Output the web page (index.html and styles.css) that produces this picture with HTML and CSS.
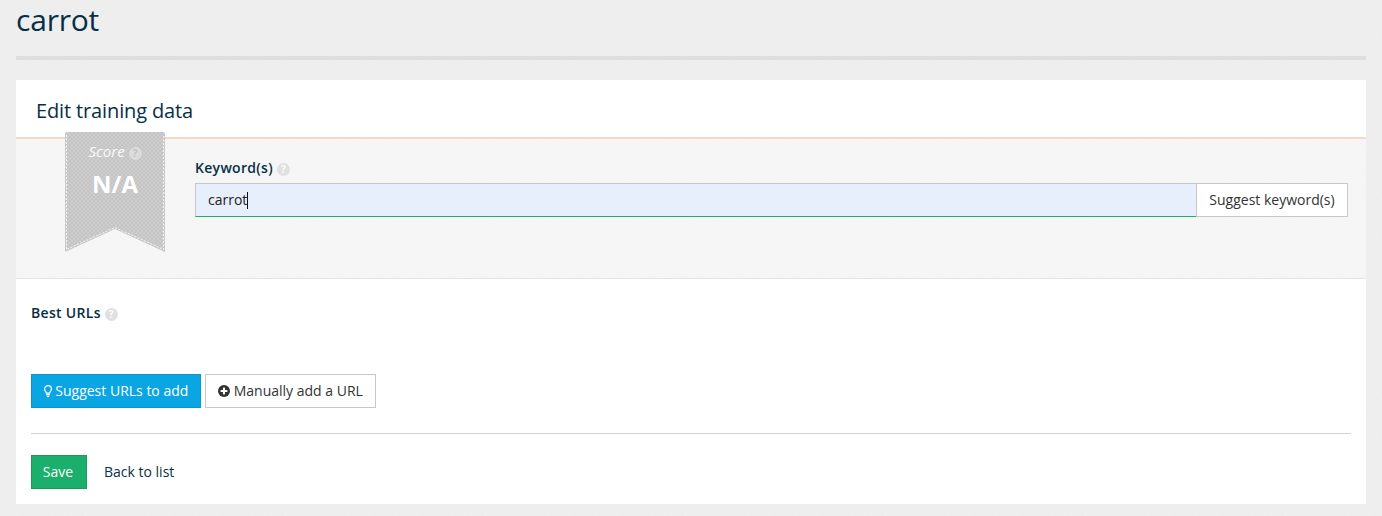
FILE: index.html
```html
<!DOCTYPE html>
<html lang="en">
<head>
    <meta charset="UTF-8">
    <title>carrot</title>
    <link rel="stylesheet" href="styles.css">
</head>
<body>

<div class="page-title">
    <h1>carrot</h1>
</div>

<div class="card">
    <div class="card-header">
        <h2>Edit training data</h2>
    </div>

    <div class="keyword-section">
        <!-- score ribbon hangs over the header line -->
        <div class="score-badge">
            <svg class="ribbon" width="100" height="120" viewBox="0 0 100 120">
                <defs>
                    <pattern id="checks" width="4" height="4" patternUnits="userSpaceOnUse">
                        <rect width="4" height="4" fill="#cdcdcd"/>
                        <rect width="2" height="2" fill="#c4c4c4"/>
                        <rect x="2" y="2" width="2" height="2" fill="#c4c4c4"/>
                    </pattern>
                </defs>
                <path d="M0 2 Q0 0 2 0 H98 Q100 0 100 2 V120 L50 97 L0 120 Z" fill="url(#checks)"/>
                <path d="M1.5 3 V117.5 L50 95.5 L98.5 117.5 V3" fill="none" stroke="#f8f8f8" stroke-width="1" stroke-dasharray="2 1.5"/>
            </svg>
            <div class="score-label">Score <span class="help help-badge">?</span></div>
            <div class="score-value">N/A</div>
        </div>

        <div class="keyword-field">
            <label class="field-label">Keyword(s) <span class="help">?</span></label>
            <div class="input-group">
                <div class="text-input">carrot<span class="caret"></span></div>
                <button class="btn btn-addon">Suggest keyword(s)</button>
            </div>
        </div>
    </div>

    <div class="card-body">
        <label class="field-label">Best URLs <span class="help">?</span></label>

        <div class="url-actions">
            <button class="btn btn-blue">
                <svg class="icon-bulb" width="8" height="13" viewBox="0 0 8 13">
                    <path d="M2.4 8.2 C2.2 6.8 .6 6 .6 4 A3.4 3.4 0 0 1 7.4 4 C7.4 6 5.8 6.8 5.6 8.2 Z" fill="none" stroke="#fff" stroke-width="1.2"/>
                    <rect x="2.2" y="8.9" width="3.6" height="1.5" fill="#fff"/>
                    <rect x="2.9" y="10.8" width="2.2" height="1.4" fill="#fff"/>
                </svg>
                Suggest URLs to add
            </button>
            <button class="btn btn-plain">
                <svg class="icon-plus" width="12" height="12" viewBox="0 0 12 12">
                    <circle cx="6" cy="6" r="6" fill="#333"/>
                    <rect x="2.6" y="5" width="6.8" height="2" fill="#fff"/>
                    <rect x="5" y="2.6" width="2" height="6.8" fill="#fff"/>
                </svg>
                Manually add a URL
            </button>
        </div>

        <div class="form-actions">
            <button class="btn btn-green">Save</button>
            <a class="back-link" href="#">Back to list</a>
        </div>
    </div>
</div>

</body>
</html>
```

FILE: styles.css
```css
* {
    box-sizing: border-box;
}
body {
    margin: 0;
    padding: 0 16px;
    height: 516px;
    overflow: hidden;
    background-color: #f0f0f0;
    /* faint paper grain */
    background-image: url("data:image/svg+xml,%3Csvg xmlns='http://www.w3.org/2000/svg' width='200' height='200'%3E%3Cfilter id='n'%3E%3CfeTurbulence type='fractalNoise' baseFrequency='.9' numOctaves='2'/%3E%3CfeColorMatrix values='0 0 0 0 .5 0 0 0 0 .5 0 0 0 0 .5 0 0 0 .09 0'/%3E%3C/filter%3E%3Crect width='200' height='200' filter='url(%23n)'/%3E%3C/svg%3E");
    font-family: "Open Sans", sans-serif;
    font-size: 14px;
    color: #062f45;
}
.page-title {
    height: 60px;
    border-bottom: 4px solid #dedede;
    margin-bottom: 20px;
}
h1 {
    margin: 0;
    font-size: 30px;
    font-weight: 400;
    line-height: 39px;
    letter-spacing: -0.2px;
}
.card {
    position: relative;
    height: 424px;
    background-color: #ffffff;
}
.card-header {
    height: 59px;
    padding: 14px 20px 0;
    border-bottom: 2px solid #fbd6c6;
}
h2 {
    margin: 0;
    font-size: 20px;
    font-weight: 400;
    line-height: 34px;
    letter-spacing: -0.13px;
}
.keyword-section {
    height: 140px;
    padding: 19px 18px 0 179px;
    background-color: #f8f8f8;
    background-image: url("data:image/svg+xml,%3Csvg xmlns='http://www.w3.org/2000/svg' width='200' height='200'%3E%3Cfilter id='n'%3E%3CfeTurbulence type='fractalNoise' baseFrequency='.9' numOctaves='2'/%3E%3CfeColorMatrix values='0 0 0 0 .5 0 0 0 0 .5 0 0 0 0 .5 0 0 0 .07 0'/%3E%3C/filter%3E%3Crect width='200' height='200' filter='url(%23n)'/%3E%3C/svg%3E");
    border-bottom: 1px solid #e4e4e4;
}
.score-badge {
    position: absolute;
    left: 49px;
    top: 52px;
    width: 100px;
    height: 120px;
    color: #ffffff;
    text-align: center;
}
.ribbon {
    position: absolute;
    left: 0;
    top: 0;
}
.score-label {
    position: relative;
    padding-top: 9px;
    font-size: 15px;
    font-style: italic;
    line-height: 20px;
    color: #fbfbfb;
}
.score-value {
    position: relative;
    margin-top: 7px;
    font-size: 24px;
    font-weight: 700;
    line-height: 32px;
}
.field-label {
    display: block;
    font-size: 14px;
    font-weight: 600;
    line-height: 20px;
    letter-spacing: 0.3px;
}
.help {
    display: inline-block;
    width: 13px;
    height: 13px;
    margin-left: 0;
    border-radius: 50%;
    background-color: #e0e0e0;
    color: #ffffff;
    font-size: 10px;
    font-style: normal;
    font-weight: 700;
    line-height: 13px;
    letter-spacing: 0;
    text-align: center;
    vertical-align: 0;
}
.help-badge {
    background-color: #dcdcdc;
    color: #c2c2c2;
}
.input-group {
    display: flex;
    height: 34px;
    margin-top: 5px;
}
.text-input {
    flex: 1;
    padding: 0 12px;
    background-color: #e7eefc;
    border: 1px solid #c8c8c8;
    border-bottom: 1px solid #1bb06c;
    border-right: 0;
    font-size: 14px;
    line-height: 32px;
    color: #222222;
}
.caret {
    display: inline-block;
    width: 1px;
    height: 17px;
    background-color: #111111;
    vertical-align: -4px;
}
.btn {
    height: 34px;
    padding: 0 12px;
    font-family: "Open Sans", sans-serif;
    font-size: 14px;
    line-height: 32px;
    background-color: #ffffff;
    border: 1px solid #c8c8c8;
    color: #333333;
}
.btn-addon {
    width: 152px;
    padding: 0;
}
.card-body {
    padding: 24px 15px 0;
}
.url-actions {
    display: flex;
    gap: 4px;
    margin-top: 51px;
    padding-bottom: 25px;
    border-bottom: 1px solid #cfcfcf;
}
.btn-blue {
    width: 170px;
    padding: 0;
    background-color: #0aa5e3;
    border-color: #0a97d0;
    color: #ffffff;
}
.btn-plain {
    width: 171px;
    padding: 0;
}
.icon-bulb {
    vertical-align: -2px;
}
.icon-plus {
    vertical-align: -1px;
}
.form-actions {
    display: flex;
    align-items: center;
    gap: 17px;
    margin-top: 21px;
}
.btn-green {
    width: 56px;
    padding: 0 2px 0 0;
    background-color: #1aaf6a;
    border-color: #179c5e;
    color: #ffffff;
}
.back-link {
    margin-top: -1px;
    color: #062f45;
    text-decoration: none;
}
```
